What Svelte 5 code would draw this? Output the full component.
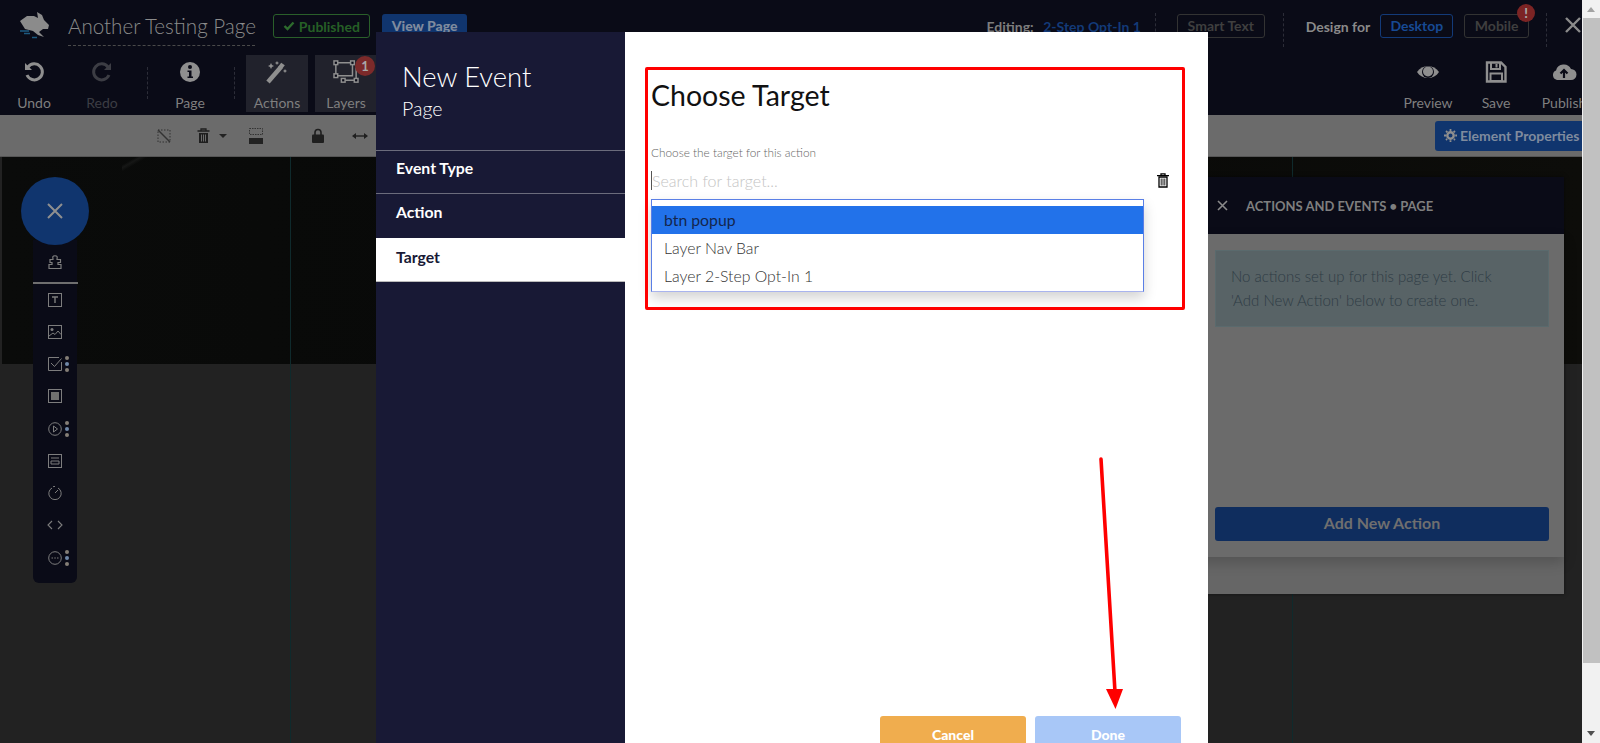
<script>
  const targets = ['btn popup', 'Layer Nav Bar', 'Layer 2-Step Opt-In 1'];
  const steps = ['Event Type', 'Action', 'Target'];
</script>

<div class="app">
  <div class="page">
    <header class="topbar">
      <svg class="logo" width="30" height="27" viewBox="0 0 30 27">
        <path d="M0 9 L7 4 L14 4 L18 6 L17 0 L22 3 L24 8 L29 13 L28 17 L23 17 L19 20 L24 25 L18 23 L13 19 L5 17 Z" fill="#8b8b8b" />
        <path d="M0 19 H9 M4 21.5 H10 M12 25.5 H17" stroke="#1d5a80" stroke-width="1.5" />
      </svg>
      <div class="page-title">Another Testing Page</div>
      <div class="published">
        <svg width="12" height="10" viewBox="0 0 12 10"><path d="M1.5 5 L4.5 8 L10.5 1.5" fill="none" stroke="#2d6b2d" stroke-width="2.4" /></svg>
        Published
      </div>
      <div class="view-page">View Page</div>
      <div class="editing"><b>Editing:</b> <span>2-Step Opt-In 1</span></div>
      <i class="dots dots--top smart-sep"></i>
      <div class="outline smart">Smart Text</div>
      <i class="dots dots--top"></i>
      <div class="design-for">Design for</div>
      <div class="outline desktop">Desktop</div>
      <div class="outline mobile">Mobile<span class="alert">!</span></div>
      <i class="dots dots--top"></i>
      <svg class="close" width="18" height="18" viewBox="0 0 18 18"><path d="M2 2 L16 16 M16 2 L2 16" stroke="#8b8b8b" stroke-width="2.4" /></svg>
    </header>

    <nav class="toolbar">
      <div class="tool">
        <svg width="22" height="22" viewBox="0 0 22 22"><path d="M5 6 A8 8 0 1 1 4 14" fill="none" stroke="#8f8f8f" stroke-width="3" /><path d="M2 2 L9 9 H2 Z" fill="#8f8f8f" /></svg>
        <span>Undo</span>
      </div>
      <div class="tool tool--off">
        <svg width="22" height="22" viewBox="0 0 22 22"><path d="M17 6 A8 8 0 1 0 18 14" fill="none" stroke="#3c3d44" stroke-width="3" /><path d="M20 2 L13 9 H20 Z" fill="#3c3d44" /></svg>
        <span>Redo</span>
      </div>
      <i class="dots"></i>
      <div class="tool">
        <svg width="22" height="22" viewBox="0 0 22 22"><circle cx="11" cy="11" r="10" fill="#8f8f8f" /><circle cx="11" cy="6" r="2" fill="#0a0b17" /><path d="M8.5 9.5 H12.5 V15.5 H14 V17 H8.5 V15.5 H10 V11 H8.5 Z" fill="#0a0b17" /></svg>
        <span>Page</span>
      </div>
      <i class="dots"></i>
      <div class="tool tool--box">
        <svg width="24" height="24" viewBox="0 0 24 24"><path d="M3 22 L16 7" stroke="#8f8f8f" stroke-width="4.5" /><path d="M15 8 L18 4" stroke="#8f8f8f" stroke-width="4.5" /><path d="M6 3 l1 2 l2 1 l-2 1 l-1 2 l-1-2 l-2-1 l2-1 Z M12 1 l.7 1.3 l1.3 .7 l-1.3 .7 l-.7 1.3 l-.7-1.3 l-1.3-.7 l1.3-.7 Z M20 9 l.7 1.3 l1.3 .7 l-1.3 .7 l-.7 1.3 l-.7-1.3 l-1.3-.7 l1.3-.7 Z" fill="#8f8f8f" /></svg>
        <span>Actions</span>
      </div>
      <div class="tool tool--box">
        <svg width="28" height="26" viewBox="0 0 28 26"><path d="M3 3 H21 V17 H3 Z M10 22 H26 M25 8 V20" fill="none" stroke="#8f8f8f" stroke-width="1.6" /><g fill="#0a0b17" stroke="#8f8f8f" stroke-width="1.6"><rect x="1" y="1" width="4" height="4" /><rect x="19" y="1" width="4" height="4" /><rect x="1" y="15" width="4" height="4" /><rect x="9" y="20" width="4" height="4" /><rect x="23" y="20" width="4" height="4" /></g></svg>
        <span>Layers</span>
        <b class="layers-badge">1</b>
      </div>
      <div class="tools-right">
        <div class="tool">
          <svg width="24" height="22" viewBox="0 0 24 22"><path d="M1 11 C6 3 18 3 23 11 C18 19 6 19 1 11 Z" fill="#8f8f8f" /><circle cx="12" cy="11" r="6" fill="#0a0b17" /><circle cx="12" cy="10.5" r="5" fill="#8f8f8f" /></svg>
          <span>Preview</span>
        </div>
        <div class="tool">
          <svg width="22" height="22" viewBox="0 0 22 22"><path d="M2 1.5 H16 L20.5 6 V20.5 H2 Z" fill="none" stroke="#8f8f8f" stroke-width="2.4" /><path d="M6 2 V8 H15 V2 M11.5 3 V6.5" fill="none" stroke="#8f8f8f" stroke-width="2" /><path d="M5.5 12.5 H17 V20 H5.5 Z" fill="none" stroke="#8f8f8f" stroke-width="2" /></svg>
          <span>Save</span>
        </div>
        <div class="tool">
          <svg width="26" height="22" viewBox="0 0 26 22"><path d="M6 19 A5 5 0 0 1 5 9.5 A8 8 0 0 1 20 8 A5.5 5.5 0 0 1 20 19 Z" fill="#8f8f8f" /><path d="M13 17 V10 M9.5 12.5 L13 9 L16.5 12.5" fill="none" stroke="#0a0b17" stroke-width="2.2" /></svg>
          <span>Publish</span>
        </div>
      </div>
    </nav>

    <div class="optionsbar">
      <svg class="opt opt--noborder" width="14" height="14" viewBox="0 0 14 14"><rect x="1" y="1" width="12" height="12" fill="none" stroke="#333" stroke-dasharray="1.5 1.5" /><path d="M1 1 L13 13" stroke="#333" stroke-width="1.4" /></svg>
      <svg class="opt opt--trash" width="13" height="16" viewBox="0 0 13 16"><path d="M4 2.5 V1 H9 V2.5 M0.5 3 H12.5" fill="none" stroke="#1f1f1f" stroke-width="1.3" /><path d="M2 5 H11 V15 H2 Z" fill="#1f1f1f" /><path d="M4.5 6.5 V13.5 M6.5 6.5 V13.5 M8.5 6.5 V13.5" stroke="#6b6b6b" /></svg>
      <i class="caret"></i>
      <svg class="opt opt--rows" width="14" height="16" viewBox="0 0 14 16"><rect x="0.5" y="0.5" width="13" height="6" fill="none" stroke="#333" stroke-dasharray="1.5 1" /><rect y="10" width="14" height="6" fill="#222" /></svg>
      <svg class="opt opt--lock" width="12" height="15" viewBox="0 0 12 15"><path d="M3 7 V4.5 A3 3 0 0 1 9 4.5 V7" fill="none" stroke="#1f1f1f" stroke-width="1.6" /><rect y="6.5" width="12" height="8.5" rx="1" fill="#1f1f1f" /></svg>
      <svg class="opt opt--width" width="16" height="8" viewBox="0 0 16 8"><path d="M2 4 H14" stroke="#1f1f1f" stroke-width="1.4" /><path d="M0 4 L4 1 V7 Z M16 4 L12 1 V7 Z" fill="#1f1f1f" /></svg>
      <div class="element-props">
        <svg width="13" height="13" viewBox="0 0 13 13"><circle cx="6.5" cy="6.5" r="3.2" fill="none" stroke="#8f8f8f" stroke-width="2.4" /><path d="M6.5 0 V13 M0 6.5 H13 M2 2 L11 11 M11 2 L2 11" stroke="#8f8f8f" stroke-width="1.8" stroke-dasharray="2 9.2" /></svg>
        Element Properties
      </div>
    </div>

    <main class="canvas">
      <div class="hero"></div>
      <i class="guide guide--left"></i>
      <i class="guide guide--right"></i>

      <aside class="elements">
        <div class="fab"><svg width="16" height="16" viewBox="0 0 16 16"><path d="M1 1 L15 15 M15 1 L1 15" stroke="#8f8f8f" stroke-width="2" /></svg></div>
        <div class="elements__list">
          <svg class="el" width="14" height="14" viewBox="0 0 14 14"><path d="M2 4.5 H5 C5 3 4.5 2.5 5 1.5 C5.5 .5 8.5 .5 9 1.5 C9.5 2.5 9 3 9 4.5 H12.5 V7.5 H10 V9.5 H13 V13.5 H1 V9.5 H4 V7.5 H2 Z" fill="none" stroke="#7d7d7d" stroke-width="1.2" /></svg>
          <hr />
          <svg class="el" width="14" height="14" viewBox="0 0 14 14"><rect x=".5" y=".5" width="13" height="13" fill="none" stroke="#7d7d7d" /><path d="M4 4 H10 M7 4 V10" stroke="#7d7d7d" stroke-width="1.4" /></svg>
          <svg class="el" width="14" height="14" viewBox="0 0 14 14"><rect x=".5" y=".5" width="13" height="13" fill="none" stroke="#7d7d7d" /><circle cx="4" cy="4.5" r="1.5" fill="#7d7d7d" /><path d="M1 11 L5 8 L7 9.5 L10 6 L13 9.5" fill="none" stroke="#7d7d7d" /></svg>
          <div class="el-row"><svg width="14" height="14" viewBox="0 0 14 14"><path d="M13.5 5 V13.5 H.5 V.5 H11" fill="none" stroke="#7d7d7d" /><path d="M3 6 L6.5 9.5 L13.5 1.5" fill="none" stroke="#7d7d7d" /></svg><i class="kebab"></i></div>
          <svg class="el" width="14" height="14" viewBox="0 0 14 14"><rect x=".5" y=".5" width="13" height="13" fill="none" stroke="#7d7d7d" /><rect x="3" y="3" width="8" height="8" fill="#6f6f6f" /></svg>
          <div class="el-row"><svg width="14" height="14" viewBox="0 0 14 14"><circle cx="7" cy="7" r="6.3" fill="none" stroke="#7d7d7d" /><path d="M5.5 4 L9.5 7 L5.5 10 Z" fill="none" stroke="#7d7d7d" /></svg><i class="kebab"></i></div>
          <svg class="el" width="14" height="14" viewBox="0 0 14 14"><rect x=".5" y=".5" width="13" height="13" fill="none" stroke="#7d7d7d" /><path d="M3 4 H11 M3 7 H11 V10 H3 Z" fill="none" stroke="#7d7d7d" /></svg>
          <svg class="el" width="14" height="14" viewBox="0 0 14 14"><path d="M4 2 A6.2 6.2 0 1 0 10 2" fill="none" stroke="#7d7d7d" /><path d="M5 .7 A6.4 6.4 0 0 1 7 .5 M7 7 L10 4" stroke="#7d7d7d" fill="none" /></svg>
          <svg class="el" width="16" height="14" viewBox="0 0 16 14"><path d="M5 3 L1 7 L5 11 M11 3 L15 7 L11 11" fill="none" stroke="#7d7d7d" stroke-width="1.1" /></svg>
          <div class="el-row"><svg width="14" height="14" viewBox="0 0 14 14"><circle cx="7" cy="7" r="6.3" fill="none" stroke="#7d7d7d" /><path d="M3.5 7 H5 M6.3 7 H7.8 M9 7 H10.5" stroke="#7d7d7d" stroke-width="1.2" /></svg><i class="kebab"></i></div>
        </div>
      </aside>

      <section class="actions-panel">
        <div class="actions-panel__head">
          <svg width="11" height="11" viewBox="0 0 11 11"><path d="M1 1 L10 10 M10 1 L1 10" stroke="#8a8a8a" stroke-width="1.6" /></svg>
          <span>ACTIONS AND EVENTS • PAGE</span>
        </div>
        <div class="actions-panel__body">
          <p class="notice">No actions set up for this page yet. Click 'Add New Action' below to create one.</p>
          <div class="add-action">Add New Action</div>
        </div>
      </section>
    </main>

    <div class="modal">
      <div class="modal__side">
        <div class="modal__heading">
          <h1>New Event</h1>
          <h2>Page</h2>
        </div>
        {#each steps as step, i}
          <div class="step" class:step--on={i === 2}>{step}</div>
        {/each}
      </div>
      <div class="modal__main">
        <h3>Choose Target</h3>
        <label for="target">Choose the target for this action</label>
        <div class="search">
          <input id="target" placeholder="Search for target..." />
          <svg width="12" height="15" viewBox="0 0 12 15"><path d="M4 2 V.8 H8 V2 M0 2.6 H12" fill="none" stroke="#000" stroke-width="1.3" /><path d="M2 4 H10 V14 H2 Z" fill="#fff" stroke="#000" stroke-width="1.3" /><path d="M4.2 5.5 V12.5 M6 5.5 V12.5 M7.8 5.5 V12.5" stroke="#222" /></svg>
        </div>
        <ul class="options">
          {#each targets as target, i}
            <li class:active={i === 0}>{target}</li>
          {/each}
        </ul>
        <div class="modal__footer">
          <button type="button" class="btn btn--cancel">Cancel</button>
          <button type="button" class="btn btn--done">Done</button>
        </div>
      </div>
    </div>

    <div class="red-box"></div>
    <svg class="arrow" width="40" height="270" viewBox="0 0 40 270">
      <path d="M3 2 L17 235" stroke="#f00" stroke-width="3.6" stroke-linecap="round" />
      <path d="M8 232 L25 232 L17.5 252 Z" fill="#f00" />
    </svg>
  </div>

  <div class="scrollbar">
    <i class="scrollbar__up"></i>
    <div class="scrollbar__thumb"></div>
    <i class="scrollbar__down"></i>
  </div>
</div>

<style>
  :global(body) {
    margin: 0;
    font-family: Lato, "Open Sans", sans-serif;
    overflow: hidden;
  }

  .app {
    display: flex;
    width: 1600px;
    height: 743px;
    overflow: hidden;
  }

  .page {
    position: relative;
    width: 1582px;
    height: 743px;
    overflow: hidden;
    display: flex;
    flex-direction: column;
    background: #222;
  }

  .topbar {
    height: 55px;
    display: flex;
    align-items: flex-start;
    background: #0a0b17;
    color: #8a8a8a;
    flex: none;
    box-sizing: border-box;
    padding: 14px 0 0 20px;
  }

  .logo {
    margin-top: -2px;
    flex: none;
  }

  .page-title {
    margin-left: 18px;
    width: 187px;
    height: 31px;
    font-size: 20.6px;
    font-weight: 300;
    line-height: 24px;
    white-space: nowrap;
    border-bottom: 1px dashed #4a4a4a;
    color: #8b8b8b;
  }

  .published {
    margin-left: 18px;
    width: 97px;
    height: 24px;
    box-sizing: border-box;
    border: 1px solid #2a5f2a;
    border-radius: 3px;
    display: flex;
    align-items: center;
    justify-content: center;
    gap: 4px;
    font-size: 14px;
    font-weight: 700;
    color: #265f26;
  }

  .view-page {
    margin-left: 12px;
    width: 86px;
    height: 24px;
    background: #10356e;
    border-radius: 3px;
    color: #7f8b9e;
    font-size: 14px;
    font-weight: 900;
    line-height: 23px;
    text-align: center;
  }

  .editing {
    margin-left: 519px;
    width: 157px;
    font-size: 14px;
    line-height: 26px;
    white-space: nowrap;
    color: #7d7d7d;
  }

  .editing span {
    margin-left: 6px;
    color: #133a78;
    font-weight: 700;
  }

  .dots {
    width: 0;
    border-left: 1px dashed #2c2d38;
    height: 32px;
    flex: none;
  }

  .dots--top {
    height: 34px;
    margin-top: -1px;
  }

  .smart-sep {
    margin-left: 12px;
  }

  .outline {
    height: 24px;
    box-sizing: border-box;
    border: 1px solid #333;
    border-radius: 3px;
    font-size: 14px;
    font-weight: 700;
    line-height: 22px;
    text-align: center;
    color: #3f3f3f;
    position: relative;
  }

  .smart {
    margin: 0 18px 0 21px;
    width: 88px;
  }

  .design-for {
    margin-left: 22px;
    width: 75px;
    font-size: 14px;
    font-weight: 700;
    line-height: 26px;
    color: #8a8a8a;
  }

  .desktop {
    width: 73px;
    border-color: #133a78;
    color: #174a94;
  }

  .mobile {
    margin: 0 17px 0 11px;
    width: 65px;
  }

  .alert {
    position: absolute;
    top: -11px;
    right: -7px;
    width: 18px;
    height: 18px;
    border-radius: 50%;
    background: #7c2424;
    color: #a8a8a8;
    font-size: 13px;
    font-weight: 900;
    line-height: 18px;
  }

  .close {
    margin: 2px 0 0 17px;
    flex: none;
  }

  .toolbar {
    height: 60px;
    flex: none;
    display: flex;
    background: #0a0b17;
    width: 1598px;
  }

  .tool {
    position: relative;
    width: 68px;
    height: 57px;
    display: flex;
    flex-direction: column;
    align-items: center;
    color: #7f7f7f;
    font-size: 14px;
    font-weight: 400;
    box-sizing: border-box;
    padding-top: 5px;
    flex: none;
  }

  .tool svg {
    height: 24px;
  }

  .tool span {
    margin-top: 10px;
    line-height: 18px;
  }

  .tool--off {
    color: #3c3d44;
  }

  .tool > span {
    white-space: nowrap;
  }

  .toolbar > .dots {
    margin: 12px 8px 0 10px;
    height: 32px;
  }

  .toolbar > .tool--off + .dots {
    margin-left: 11px;
  }

  .tool--box {
    width: 62px;
    background: #21222c;
    margin-right: 7px;
  }

  .toolbar > .dots + .tool--box {
    margin-left: 3px;
  }

  .layers-badge {
    position: absolute;
    top: 1px;
    right: 2px;
    width: 20px;
    height: 20px;
    border-radius: 50%;
    background: #7c2a2a;
    color: #a8a8a8;
    font-size: 13px;
    line-height: 20px;
    text-align: center;
  }

  .tools-right {
    margin-left: auto;
    display: flex;
  }

  .optionsbar {
    height: 42px;
    flex: none;
    background: #6b6b6b;
    border-bottom: 1px solid #555;
    box-sizing: border-box;
    display: flex;
    align-items: center;
  }

  .opt {
    flex: none;
  }

  .opt--noborder {
    margin-left: 157px;
  }

  .opt--trash {
    margin-left: 26px;
  }

  .caret {
    margin-left: 9px;
    width: 0;
    height: 0;
    border-left: 4px solid transparent;
    border-right: 4px solid transparent;
    border-top: 4px solid #222;
  }

  .opt--rows {
    margin-left: 22px;
  }

  .opt--lock {
    margin-left: 49px;
  }

  .opt--width {
    margin-left: 28px;
  }

  .element-props {
    margin-left: auto;
    width: 147px;
    height: 30px;
    background: #10356e;
    border-radius: 3px 0 0 3px;
    color: #7f8b9e;
    font-size: 14px;
    font-weight: 700;
    display: flex;
    align-items: center;
    gap: 3px;
    padding-left: 9px;
    box-sizing: border-box;
    white-space: nowrap;
  }

  .canvas {
    position: relative;
    flex: 1;
    background: #222;
  }

  .hero {
    margin-left: 2px;
    height: 207px;
    background:
      linear-gradient(150deg, transparent 8%, #161716 11%, transparent 15%) 120px 0 / 120px 30px no-repeat,
      linear-gradient(90deg, #0a0b0a, #070807 50%, #0d0d0a);
  }

  .guide {
    position: absolute;
    top: 0;
    bottom: 0;
    width: 1px;
    background: #0f2a2c;
  }

  .guide--left {
    left: 290px;
  }

  .guide--right {
    left: 1292px;
  }

  /* floating element picker */
  .elements {
    position: absolute;
    left: 21px;
    top: 20px;
    width: 68px;
    display: flex;
    flex-direction: column;
    align-items: center;
  }

  .fab {
    position: relative;
    width: 68px;
    height: 68px;
    border-radius: 50%;
    background: #10356e;
    display: flex;
    align-items: center;
    justify-content: center;
  }

  .elements__list {
    width: 44px;
    height: 343px;
    margin-top: -5px;
    padding-top: 15px;
    box-sizing: border-box;
    background: #0a0b17;
    border-radius: 0 0 6px 6px;
    display: flex;
    flex-direction: column;
    align-items: center;
    gap: 18.25px;
  }

  .elements__list hr {
    width: 45px;
    height: 2px;
    flex: none;
    margin: -5px 0 -10px;
    border: 0;
    background: #6f6f6f;
  }

  .el {
    flex: none;
  }

  .el-row {
    position: relative;
    height: 14px;
    display: flex;
  }

  .kebab {
    position: absolute;
    left: 17px;
    top: -1px;
    width: 4px;
    height: 4px;
    border-radius: 50%;
    background: #857f76;
    box-shadow: 0 6px 0 #7088a8, 0 12px 0 #857f76;
  }

  .actions-panel {
    position: absolute;
    left: 1060px;
    top: 20px;
    width: 504px;
    height: 417px;
    background: #666;
    box-shadow: 0 0 4px rgba(0, 0, 0, 0.5);
  }

  .actions-panel__head {
    height: 57px;
    background: #0a0b17;
    display: flex;
    align-items: center;
    box-sizing: border-box;
    padding-left: 157px;
    gap: 18px;
    color: #7f7f7f;
    font-size: 13px;
    font-weight: 700;
    white-space: nowrap;
  }

  .actions-panel__body {
    height: 323px;
    background: #6b6b6b;
    box-sizing: border-box;
    padding: 16px 15px 0 155px;
    box-shadow: 0 6px 12px rgba(0, 0, 0, 0.18);
  }

  .notice {
    margin: 0;
    height: 77px;
    box-sizing: border-box;
    padding: 13px 40px 0 15px;
    background: #586366;
    border: 1px solid #5a6a6d;
    color: #2f3c45;
    font-size: 15px;
    font-weight: 300;
    line-height: 24px;
  }

  .add-action {
    margin-top: 180px;
    height: 34px;
    background: #0f2d5e;
    border-radius: 3px;
    color: #6f6f6f;
    font-size: 16px;
    font-weight: 700;
    line-height: 32px;
    text-align: center;
  }

  .modal {
    position: absolute;
    left: 376px;
    top: 32px;
    width: 832px;
    height: 740px;
    display: flex;
  }

  .modal__side {
    width: 249px;
    flex: none;
    background: #181935;
    color: #fff;
  }

  .modal__heading {
    height: 119px;
    box-sizing: border-box;
    padding: 27px 0 0 26px;
    border-bottom: 1px solid #6b6c7c;
  }

  h1 {
    margin: 0;
    font-size: 27.4px;
    font-weight: 300;
    line-height: 36px;
  }

  h2 {
    margin: 0;
    font-size: 19.5px;
    font-weight: 300;
    line-height: 28px;
  }

  .step {
    height: 43px;
    box-sizing: border-box;
    padding: 7px 0 0 20px;
    font-size: 15.8px;
    font-weight: 700;
    line-height: 22px;
    border-bottom: 1px solid #6b6c7c;
  }

  .step:nth-child(2) {
    padding-top: 6px;
  }

  .step--on {
    height: 44px;
    margin-top: 1px;
    padding-top: 8px;
    background: #fff;
    color: #181935;
    border-bottom: 1px solid #bbb;
  }

  .step:nth-child(3) {
    border-bottom: 0;
  }

  .modal__main {
    flex: 1;
    background: #fff;
    display: flex;
    flex-direction: column;
    box-sizing: border-box;
    padding: 46px 26px 16px;
  }

  h3 {
    margin: 0;
    font-size: 28.5px;
    font-weight: 400;
    line-height: 34px;
    color: #111;
  }

  label {
    margin-top: 33px;
    font-size: 11.8px;
    font-weight: 300;
    line-height: 16px;
    color: #666;
  }

  .search {
    margin-top: 8px;
    height: 22px;
    display: flex;
    align-items: center;
    justify-content: space-between;
    padding-right: 13px;
  }

  .search svg {
    margin-top: 1px;
  }

  input {
    width: 300px;
    padding: 0;
    border: 0;
    border-left: 1px solid #555;
    outline: 0;
    height: 19px;
    font: 300 16px Lato, sans-serif;
    color: #333;
  }

  input::placeholder {
    color: #c4c4c4;
  }

  .options {
    margin: 8px 0 0;
    padding: 6px 0 0;
    width: 493px;
    height: 93px;
    box-sizing: border-box;
    list-style: none;
    border: 1px solid #5a7fe6;
    border-bottom-color: #a9b4ee;
    box-shadow: 0 6px 12px rgba(0, 0, 0, 0.175);
    background: #fff;
    font-size: 15.8px;
    font-weight: 300;
    color: #333;
  }

  li {
    height: 28px;
    line-height: 27px;
    padding-left: 12px;
  }

  li.active {
    background: #2272ea;
    color: #14264d;
    font-weight: 400;
  }

  .modal__footer {
    margin-top: auto;
    display: flex;
    gap: 9px;
    padding-left: 229px;
  }

  .btn {
    width: 146px;
    height: 40px;
    border: 0;
    border-radius: 3px;
    padding: 0 0 3px;
    color: #fff;
    font: 900 14px Lato, sans-serif;
  }

  .btn--cancel {
    background: #f0ad4e;
  }

  .btn--done {
    background: #a8c7f7;
  }

  /* annotations drawn over the screenshot */
  .red-box {
    position: absolute;
    left: 645px;
    top: 67px;
    width: 540px;
    height: 243px;
    box-sizing: border-box;
    border: 3.5px solid #f00;
    border-radius: 2px;
  }

  .arrow {
    position: absolute;
    left: 1098px;
    top: 457px;
  }

  .scrollbar {
    width: 18px;
    flex: none;
    background: #f1f1f1;
    position: relative;
  }

  .scrollbar__thumb {
    position: absolute;
    left: 1px;
    right: 0;
    top: 18px;
    height: 645px;
    background: #c1c1c1;
  }

  .scrollbar__up,
  .scrollbar__down {
    position: absolute;
    left: 5px;
    width: 0;
    height: 0;
    border-left: 4px solid transparent;
    border-right: 4px solid transparent;
  }

  .scrollbar__up {
    top: 7px;
    border-bottom: 5px solid #a3a3a3;
  }

  .scrollbar__down {
    bottom: 7px;
    border-top: 5px solid #505050;
  }
</style>
